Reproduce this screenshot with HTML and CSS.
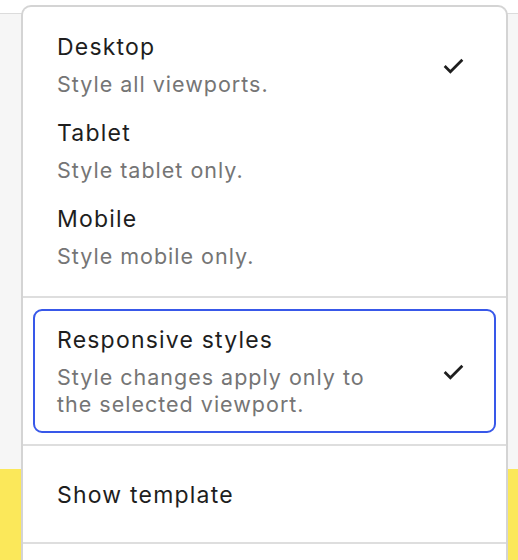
FILE: index.html
```html
<!DOCTYPE html>
<html lang="en">
<head>
<meta charset="utf-8">
<link rel="stylesheet" href="styles.css">
</head>
<body>
<div class="stage">
  <div class="bg-top"></div>
  <div class="bg-mid"></div>
  <div class="bg-yellow"></div>

  <div class="menu" role="menu">
    <div class="group group-views">
      <div class="item" role="menuitemradio" aria-checked="true">
        <div class="text">
          <div class="title">Desktop</div>
          <div class="desc">Style all viewports.</div>
        </div>
        <svg class="check" viewBox="0 0 24 24" aria-hidden="true"><path d="M3.5 12.5 L9 18 L20.5 6.5"/></svg>
      </div>
      <div class="item" role="menuitemradio" aria-checked="false">
        <div class="text">
          <div class="title">Tablet</div>
          <div class="desc">Style tablet only.</div>
        </div>
      </div>
      <div class="item" role="menuitemradio" aria-checked="false">
        <div class="text">
          <div class="title">Mobile</div>
          <div class="desc">Style mobile only.</div>
        </div>
      </div>
    </div>

    <div class="group group-responsive">
      <div class="item item-boxed" role="menuitemcheckbox" aria-checked="true">
        <div class="text">
          <div class="title">Responsive styles</div>
          <div class="desc">Style changes apply only to<br>the selected viewport.</div>
        </div>
        <svg class="check" viewBox="0 0 24 24" aria-hidden="true"><path d="M3.5 12.5 L9 18 L20.5 6.5"/></svg>
      </div>
    </div>

    <div class="group group-template">
      <div class="item item-plain" role="menuitem">
        <div class="title">Show template</div>
      </div>
    </div>

    <div class="group group-rest"></div>
  </div>
</div>
</body>
</html>
```

FILE: styles.css
```css
* { box-sizing: border-box; }

html, body {
  margin: 0;
  padding: 0;
}

body {
  width: 518px;
  height: 560px;
  overflow: hidden;
  font-family: Inter, "Noto Sans", "Liberation Sans", sans-serif;
  background: #f7f7f7;
}

.stage {
  position: relative;
  width: 518px;
  height: 560px;
  display: flex;
  flex-direction: column;
}

.bg-top {
  height: 14px;
  background: #ffffff;
  border-bottom: 1px solid #dcdcdc;
}

.bg-mid {
  height: 455px;
  background: #f6f6f6;
}

.bg-yellow {
  flex: 1;
  background: #fbe85a;
}

.menu {
  position: absolute;
  left: 21px;
  top: 5px;
  width: 487px;
  height: 555px;
  overflow: hidden;
  background: #ffffff;
  border: 2px solid #d4d4d4;
  border-bottom: none;
  border-radius: 10px 10px 0 0;
  display: flex;
  flex-direction: column;
}

.group + .group {
  border-top: 2px solid #dedede;
}

.group-views {
  padding: 15px 0 16px;
}

.group-responsive {
  padding: 11px 10px;
}

.group-template {
  padding: 34px 34px 32px;
}

.group-rest {
  flex: 1;
}

.item {
  display: flex;
  align-items: center;
  justify-content: space-between;
  padding: 10px 40px 10px 34px;
}

.item-boxed {
  border: 2px solid #3858e9;
  border-radius: 9px;
  padding: 14px 28px 13px 22px;
}

.item-plain {
  padding: 0;
}

.title {
  font-size: 23px;
  line-height: 30px;
  color: #1e1e1e;
  letter-spacing: 1.2px;
}

.desc {
  margin-top: 9px;
  font-size: 21.5px;
  line-height: 27px;
  color: #757575;
  letter-spacing: 1px;
}

.check {
  width: 25px;
  height: 25px;
  flex: none;
  fill: none;
  stroke: #1e1e1e;
  stroke-width: 2.6;
  stroke-linecap: butt;
  stroke-linejoin: miter;
}
```
